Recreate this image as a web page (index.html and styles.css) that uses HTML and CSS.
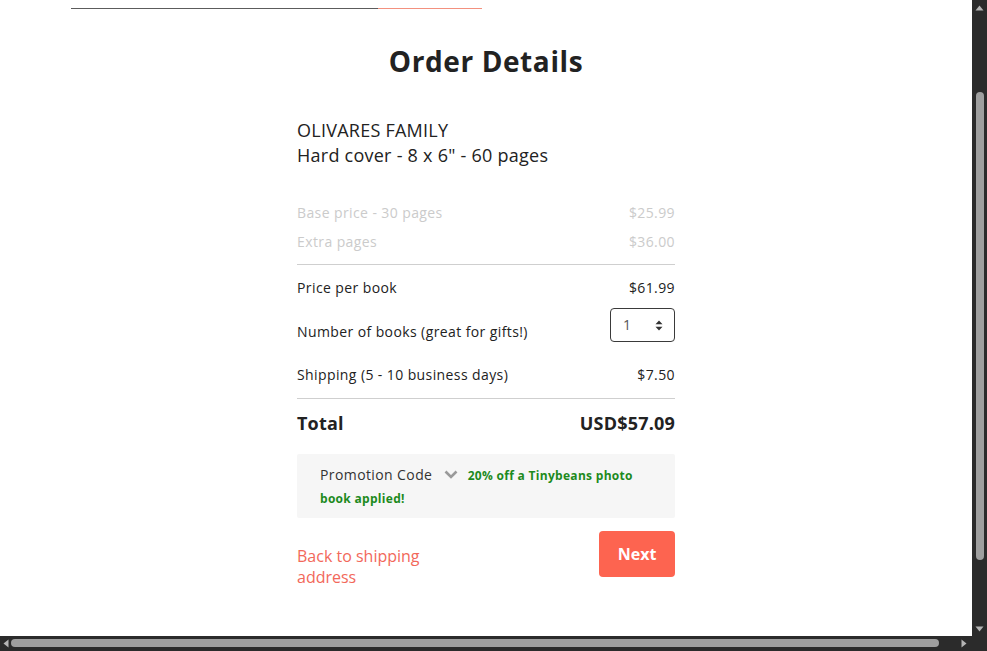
FILE: index.html
```html
<!DOCTYPE html>
<html lang="en">
<head>
<meta charset="utf-8">
<title>Order Details</title>
<link rel="stylesheet" href="styles.css">
</head>
<body>
<div class="window">
  <main class="viewport">
    <div class="progress">
      <span class="progress-done"></span><span class="progress-current"></span>
    </div>
    <h1 class="title">Order Details</h1>
    <section class="order">
      <div class="product">
        <div>OLIVARES FAMILY</div>
        <div>Hard cover - 8 x 6" - 60 pages</div>
      </div>
      <div class="breakdown">
        <div class="row muted"><span>Base price - 30 pages</span><span>$25.99</span></div>
        <div class="row muted"><span>Extra pages</span><span>$36.00</span></div>
      </div>
      <hr class="divider divider-first">
      <div class="row line price-row"><span>Price per book</span><span>$61.99</span></div>
      <div class="row line books-row">
        <span>Number of books (great for gifts!)</span>
        <div class="qty">
          <span>1</span>
          <svg class="qty-arrows" width="8" height="11" viewBox="0 0 8 11"><path d="M4 0.5 L7.5 4.3 H0.5 Z M4 10.5 L7.5 6.7 H0.5 Z" fill="#333"/></svg>
        </div>
      </div>
      <div class="row line ship-row"><span>Shipping (5 - 10 business days)</span><span>$7.50</span></div>
      <hr class="divider divider-second">
      <div class="row total"><span>Total</span><span>USD$57.09</span></div>
      <div class="promo">
        <span class="promo-label">Promotion Code</span>
        <svg class="chevron" width="14" height="9" viewBox="0 0 14 9"><polyline points="1.5,1.5 7,7 12.5,1.5" fill="none" stroke="#9a9a9a" stroke-width="2.6"/></svg>
        <span class="promo-applied">20% off a Tinybeans photo book applied!</span>
      </div>
      <div class="actions">
        <a class="back-link" href="#">Back to shipping address</a>
        <button class="next-btn" type="button">Next</button>
      </div>
    </section>
  </main>
  <div class="vscroll">
    <svg class="arrow" width="9" height="6" viewBox="0 0 9 6"><path d="M4.5 0.5 L8.5 5.5 H0.5 Z" fill="#b5b5b5"/></svg>
    <div class="vtrack"><div class="vthumb"></div></div>
    <svg class="arrow" width="9" height="6" viewBox="0 0 9 6"><path d="M4.5 5.5 L8.5 0.5 H0.5 Z" fill="#b5b5b5"/></svg>
  </div>
  <div class="hscroll">
    <svg class="arrow" width="6" height="9" viewBox="0 0 6 9"><path d="M0.5 4.5 L5.5 0.5 V8.5 Z" fill="#b5b5b5"/></svg>
    <div class="htrack"><div class="hthumb"></div></div>
    <svg class="arrow" width="6" height="9" viewBox="0 0 6 9"><path d="M5.5 4.5 L0.5 0.5 V8.5 Z" fill="#b5b5b5"/></svg>
  </div>
  <div class="corner"></div>
</div>
</body>
</html>
```
FILE: styles.css
```css
* { box-sizing: border-box; }
html, body { margin: 0; padding: 0; background: #fff; }
body { font-family: "Open Sans", "Liberation Sans", sans-serif; color: #222; }

.window {
  display: grid;
  grid-template-columns: 972px 15px;
  grid-template-rows: 636px 15px;
  width: 987px;
  height: 651px;
  overflow: hidden;
}

.viewport {
  background: #fff;
  overflow: hidden;
  padding-top: 8px;
}

.progress { display: flex; margin-left: 71px; height: 2px; }
.progress-done { width: 307px; height: 1px; background: #5c5c5c; }
.progress-current { width: 104px; height: 1px; background: #f3917f; }

.title {
  margin: 32px 0 0;
  text-align: center;
  font-size: 28px;
  font-weight: 700;
  line-height: 38px;
  letter-spacing: 0.6px;
  color: #222;
}

.order { width: 378px; margin: 0 auto; }

.product {
  margin-top: 38px;
  font-size: 18px;
  line-height: 25px;
  letter-spacing: 0.25px;
  color: #222;
}

.breakdown { margin-top: 30px; }

.row { display: flex; justify-content: space-between; font-size: 14px; letter-spacing: 0.4px; }
.muted { color: #cbcbcb; line-height: 29px; }

.divider { border: 0; border-top: 1px solid #cfcfcf; margin: 0; }
.divider-first { margin-top: 8px; }
.divider-second { margin-top: 13px; }

.line { line-height: 20px; color: #222; }
.price-row { margin-top: 13px; }
.books-row { margin-top: 10px; align-items: flex-end; }
.ship-row { margin-top: 23px; }

.qty {
  width: 65px;
  height: 34px;
  border: 1px solid #3a3a3a;
  border-radius: 4px;
  display: flex;
  align-items: center;
  justify-content: space-between;
  padding: 0 11px 0 12px;
  color: #555;
  font-size: 14px;
}
.qty-arrows { display: block; }

.total {
  margin-top: 12px;
  font-size: 18px;
  font-weight: 700;
  line-height: 25px;
  letter-spacing: 0.2px;
}

.promo {
  margin-top: 18px;
  background: #f6f6f6;
  border-radius: 2px;
  padding: 10px 23px 8px;
  line-height: 22px;
  font-size: 14px;
}
.promo-label { color: #333; letter-spacing: 0.4px; }
.chevron { margin: 0 6px 0 8px; vertical-align: 1px; }
.promo-applied { color: #1d8a1d; font-weight: 700; font-size: 12px; letter-spacing: 0.3px; }

.actions {
  margin-top: 13px;
  display: flex;
  justify-content: space-between;
  align-items: flex-start;
}
.back-link {
  margin-top: 15px;
  width: 160px;
  font-size: 16px;
  line-height: 21px;
  color: #f2685a;
  text-decoration: none;
}
.next-btn {
  width: 76px;
  height: 46px;
  border: 0;
  border-radius: 4px;
  background: #fd6450;
  color: #fff;
  font-family: "Open Sans", "Liberation Sans", sans-serif;
  font-weight: 700;
  font-size: 16px;
  padding: 0;
}

.vscroll {
  background: #2b2b2b;
  display: flex;
  flex-direction: column;
  align-items: center;
  padding: 5px 0 4px;
}
.vtrack { flex: 1; width: 100%; padding: 81px 3px 66px 4px; }
.vthumb { height: 100%; background: #9f9f9f; border-radius: 4px; }

.hscroll {
  background: #2b2b2b;
  display: flex;
  align-items: center;
  padding: 0 5px 0 3px;
}
.htrack { flex: 1; height: 100%; padding: 3px 22px 4px 2px; }
.hthumb { height: 100%; background: #9f9f9f; border-radius: 4px; }

.arrow { display: block; flex: none; }
.corner { background: #2b2b2b; }
```
